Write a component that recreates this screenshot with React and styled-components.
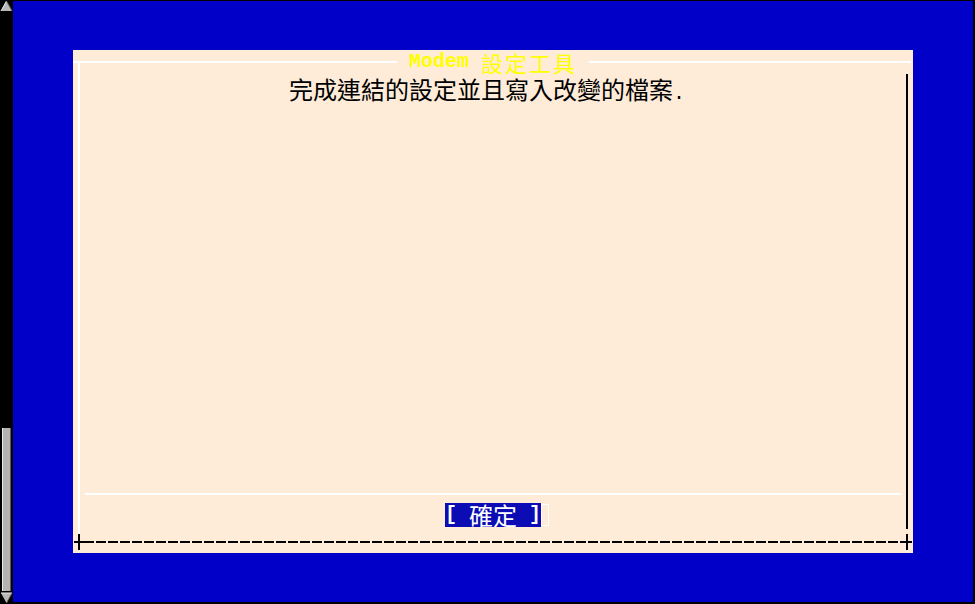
import React from 'react';
import styled, { createGlobalStyle } from 'styled-components';

const GlobalStyle = createGlobalStyle`
  html, body {
    margin: 0;
    padding: 0;
    background: #000;
  }
  body {
    font-family: "Liberation Serif", "Noto Sans CJK TC", serif;
  }
`;

const Screen = styled.div`
  display: flex;
  width: 975px;
  height: 604px;
  overflow: hidden;
  background: #000;
`;

const Scrollbar = styled.div`
  width: 13px;
  flex: none;
  display: flex;
  flex-direction: column;
  background: #000;
`;

const Arrow = styled.svg`
  display: block;
  width: 13px;
  height: 12px;
  flex: none;
`;

const ScrollGap = styled.div`
  flex: 1;
`;

const Thumb = styled.div`
  height: 163px;
  margin: 0 2px 1px 2px;
  background: #b3b3b3;
  border-left: 1px solid #e8e8e8;
  border-right: 1px solid #5a5a5a;
`;

const Terminal = styled.main`
  flex: 1;
  background: #0000c8;
  border-top: 1px solid #000;
  border-right: 2px solid #000;
  border-bottom: 2px solid #000;
  padding: 49px 0 0 60px;
`;

const Dialog = styled.section`
  width: 840px;
  height: 503px;
  box-sizing: border-box;
  padding: 11px 5px 0;
  background: #feebd8;
  display: flex;
  flex-direction: column;
`;

const Frame = styled.div`
  height: 473px;
  box-sizing: border-box;
  border-left: 2px solid #fff;
  display: flex;
  flex-direction: column;
`;

const TitleRow = styled.div`
  display: flex;
  align-items: center;
  height: 24px;
  margin: -11px -3px 0 -7px;
`;

const Rule = styled.div`
  height: 2px;
  background: #fff;
  flex: ${p => (p.$width ? `0 0 ${p.$width}px` : '1')};
`;

const Title = styled.h1`
  display: flex;
  align-items: center;
  height: 20px;
  margin: 0;
  padding: 0 12px;
  font-weight: normal;
  font-size: 22px;
  line-height: 20px;
  letter-spacing: 2px;
  color: #ffff00;
  white-space: pre;
  font-family: "Noto Sans CJK TC", sans-serif;
`;

const Latin = styled.span`
  display: inline-block;
  font-family: "Liberation Mono", monospace;
  font-size: 20px;
  line-height: 20px;
  letter-spacing: 0;
  font-weight: ${p => (p.$bold ? 'bold' : 'normal')};
`;

const Body = styled.div`
  flex: 1;
  display: flex;
  flex-direction: column;
  border-right: 2px solid #000;
  margin-bottom: 5px;
`;

const Message = styled.p`
  margin: 3px 0 0;
  padding-left: 209px;
  font-size: 24px;
  line-height: 24px;
  color: #000;
  white-space: nowrap;
  font-family: "Noto Sans CJK TC", sans-serif;
`;

const Separator = styled.div`
  height: 2px;
  background: #fff;
  margin: auto 5px 0;
`;

const ButtonRow = styled.div`
  display: flex;
  align-items: center;
  padding: 8px 0 0 365px;
  margin-bottom: 2px;
`;

const OkButton = styled.button`
  display: flex;
  align-items: center;
  height: 24px;
  padding: 0;
  border: none;
  background: #0c0cb4;
  color: #fff;
  font-size: 24px;
  line-height: 24px;
  white-space: pre;
  font-family: "Noto Sans CJK TC", sans-serif;
`;

const Cursor = styled.span`
  width: 8px;
  height: 22px;
  box-sizing: border-box;
  border: 1px solid #fff;
`;

const BottomEdge = styled.div`
  display: flex;
  align-items: center;
  height: 16px;
  margin: 0 -4px;
`;

const Cross = styled.div`
  width: 10px;
  height: 16px;
  flex: none;
  background:
    linear-gradient(#000, #000) center / 2px 100% no-repeat,
    linear-gradient(#000, #000) center / 100% 2px no-repeat;
`;

const Dashes = styled.div`
  flex: 1;
  height: 2px;
  background: repeating-linear-gradient(90deg, #000 0 10px, transparent 10px 12px);
`;

const App = () => {
  return (
    <Screen>
      <GlobalStyle />
      <Scrollbar>
        <Arrow viewBox="0 0 13 12">
          <polygon points="1,11 6.5,1 12,11" fill="#b8b8b8" />
          <line x1="1" y1="11" x2="6.5" y2="1" stroke="#eee" strokeWidth="1" />
          <line x1="6.5" y1="1" x2="12" y2="11" stroke="#666" strokeWidth="1" />
        </Arrow>
        <ScrollGap />
        <Thumb />
        <Arrow viewBox="0 0 13 12">
          <polygon points="1,1 12,1 6.5,11" fill="#b8b8b8" />
          <line x1="1" y1="1" x2="12" y2="1" stroke="#eee" strokeWidth="1" />
          <line x1="12" y1="1" x2="6.5" y2="11" stroke="#666" strokeWidth="1" />
        </Arrow>
      </Scrollbar>
      <Terminal>
        <Dialog>
          <Frame>
            <TitleRow>
              <Rule $width={324} />
              <Title><Latin $bold>Modem </Latin>設定工具</Title>
              <Rule />
            </TitleRow>
            <Body>
              <Message>完成連結的設定並且寫入改變的檔案<Latin>.</Latin></Message>
              <Separator />
              <ButtonRow>
                <OkButton><Latin $bold>[ </Latin>確定<Latin $bold> ]</Latin></OkButton>
                <Cursor />
              </ButtonRow>
            </Body>
          </Frame>
          <BottomEdge>
            <Cross />
            <Dashes />
            <Cross />
          </BottomEdge>
        </Dialog>
      </Terminal>
    </Screen>
  );
};

export default App;
